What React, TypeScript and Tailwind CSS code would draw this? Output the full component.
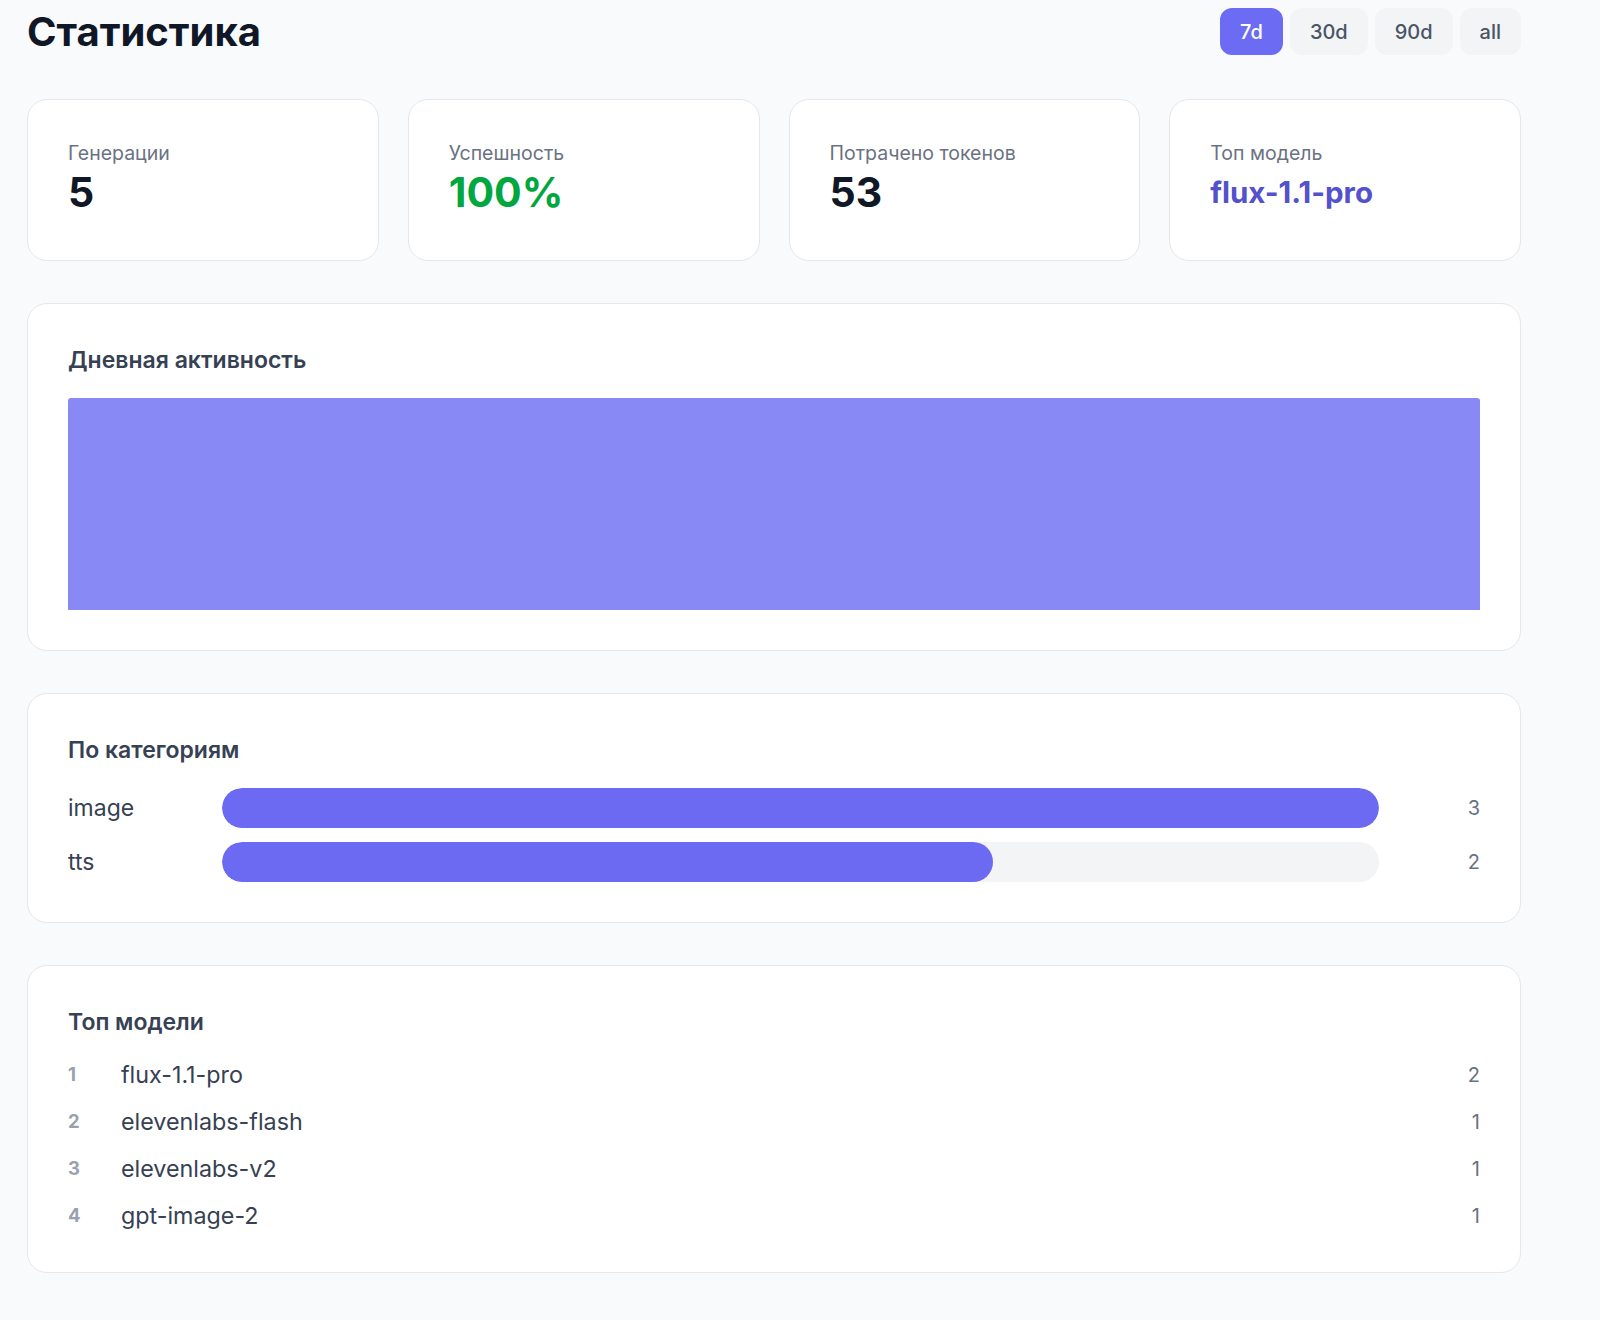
import * as React from 'react'

const periods = ['7d', '30d', '90d', 'all']

const stats = [
  { label: 'Генерации', value: '5', tone: 'text-gray-900 text-[41px] font-bold' },
  { label: 'Успешность', value: '100%', tone: 'text-green-600 text-[41px] font-bold' },
  { label: 'Потрачено токенов', value: '53', tone: 'text-gray-900 text-[41px] font-bold' },
  { label: 'Топ модель', value: 'flux-1.1-pro', tone: 'text-[#5451cc] text-[29.5px] font-bold' },
]

const categories = [
  { name: 'image', count: 3 },
  { name: 'tts', count: 2 },
]

const topModels = [
  { name: 'flux-1.1-pro', count: 2 },
  { name: 'elevenlabs-flash', count: 1 },
  { name: 'elevenlabs-v2', count: 1 },
  { name: 'gpt-image-2', count: 1 },
]

function Card({ children }: { children: React.ReactNode }) {
  return <div className="rounded-[20px] border border-gray-200 bg-white px-10 pt-10 pb-10">{children}</div>
}

function CardTitle({ children }: { children: React.ReactNode }) {
  return <h2 className="text-[23px] leading-[32px] font-semibold text-gray-700">{children}</h2>
}

export default function App() {
  const [period, setPeriod] = React.useState('7d')
  const maxCat = Math.max(...categories.map((c) => c.count))

  return (
    <div className="min-h-[1320px] bg-gray-50 font-['Inter','Noto_Sans',sans-serif]">
      <div className="ml-[27px] w-[1494px] pt-[8px] pb-10 flex flex-col gap-[42px]">
        <div className="flex items-center justify-between mb-[2px]">
          <h1 className="text-[40px] leading-[47px] font-bold text-gray-900">Статистика</h1>
          <div className="flex gap-[7px]">
            {periods.map((p) => (
              <button
                key={p}
                onClick={() => setPeriod(p)}
                className={
                  p === period
                    ? 'h-[47px] px-5 rounded-xl bg-[#6b6bf3] text-white text-[20px] font-medium'
                    : 'h-[47px] px-5 rounded-xl bg-gray-100 text-gray-600 text-[20px] font-medium'
                }
              >
                {p}
              </button>
            ))}
          </div>
        </div>

        <div className="grid grid-cols-4 gap-[29px]">
          {stats.map((s) => (
            <div key={s.label} className="rounded-[20px] border border-gray-200 bg-white px-10 pt-10 pb-[42px]">
              <p className="text-[19.5px] leading-[26px] text-gray-500">{s.label}</p>
              <p className={`leading-[52px] ${s.tone}`}>{s.value}</p>
            </div>
          ))}
        </div>

        <Card>
          <CardTitle>Дневная активность</CardTitle>
          <div className="mt-[22px] h-[212px] rounded-t-[3px] bg-[#8989f6]" />
        </Card>

        <Card>
          <CardTitle>По категориям</CardTitle>
          <div className="mt-[22px] flex flex-col gap-[14px]">
            {categories.map((c) => (
              <div key={c.name} className="flex items-center h-10">
                <span className="w-[154px] text-[23px] text-gray-700">{c.name}</span>
                <div className="flex-1 h-10 rounded-full bg-gray-100 overflow-hidden">
                  <div
                    className="h-full rounded-full bg-[#6c6af2]"
                    style={{ width: `${(c.count / maxCat) * 100}%` }}
                  />
                </div>
                <span className="w-[101px] text-right text-[20px] text-gray-500">{c.count}</span>
              </div>
            ))}
          </div>
        </Card>

        <Card>
          <CardTitle>Топ модели</CardTitle>
          <div className="mt-[21px] flex flex-col gap-[15px]">
            {topModels.map((m, i) => (
              <div key={m.name} className="flex items-center h-8">
                <span className="w-[53px] text-[18.5px] font-bold text-gray-400">{i + 1}</span>
                <span className="flex-1 text-[23.3px] text-gray-700">{m.name}</span>
                <span className="text-[20px] text-gray-500">{m.count}</span>
              </div>
            ))}
          </div>
        </Card>
      </div>
    </div>
  )
}
